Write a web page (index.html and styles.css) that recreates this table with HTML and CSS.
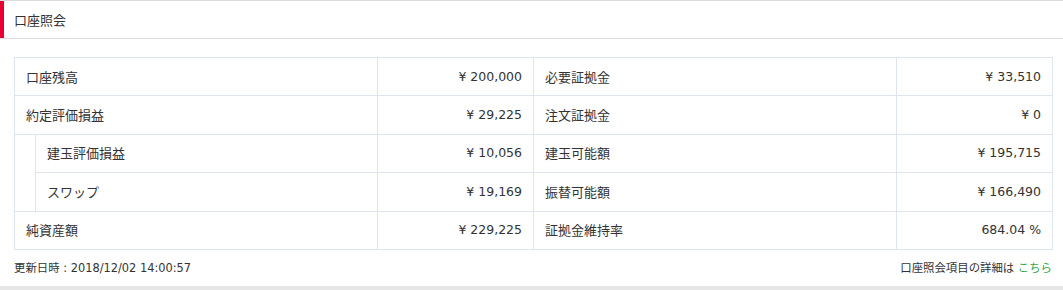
FILE: index.html
```html
<!DOCTYPE html>
<html lang="ja">
<head>
<meta charset="utf-8">
<link rel="stylesheet" href="styles.css">
</head>
<body>
<div class="panel">
  <div class="panel-head"><span class="panel-title">口座照会</span></div>
  <div class="panel-body">
    <table class="acct">
      <colgroup>
        <col class="c-indent"><col class="c-label"><col class="c-val"><col class="c-label2"><col class="c-val">
      </colgroup>
      <tr>
        <td colspan="2" class="lbl">口座残高</td>
        <td class="val">¥ 200,000</td>
        <td class="lbl">必要証拠金</td>
        <td class="val">¥ 33,510</td>
      </tr>
      <tr>
        <td colspan="2" class="lbl">約定評価損益</td>
        <td class="val">¥ 29,225</td>
        <td class="lbl">注文証拠金</td>
        <td class="val">¥ 0</td>
      </tr>
      <tr>
        <td rowspan="2" class="indent"></td>
        <td class="lbl">建玉評価損益</td>
        <td class="val">¥ 10,056</td>
        <td class="lbl">建玉可能額</td>
        <td class="val">¥ 195,715</td>
      </tr>
      <tr>
        <td class="lbl">スワップ</td>
        <td class="val">¥ 19,169</td>
        <td class="lbl">振替可能額</td>
        <td class="val">¥ 166,490</td>
      </tr>
      <tr>
        <td colspan="2" class="lbl">純資産額</td>
        <td class="val">¥ 229,225</td>
        <td class="lbl">証拠金維持率</td>
        <td class="val">684.04 %</td>
      </tr>
    </table>
    <div class="foot">
      <span>更新日時 : 2018/12/02 14:00:57</span>
      <span>口座照会項目の詳細は <a class="link" href="#">こちら</a></span>
    </div>
  </div>
</div>
</body>
</html>
```

FILE: styles.css
```css
html, body {
  margin: 0;
  padding: 0;
  background: #fff;
}
body {
  font-family: "Noto Sans CJK JP", "DejaVu Sans", sans-serif;
  color: #333;
  width: 1063px;
  height: 290px;
  overflow: hidden;
}
.panel {
  border-bottom: 4px solid #e6e6e6;
  height: 286px;
  box-sizing: content-box;
}
.panel-head {
  border-top: 1px solid #dcdcdc;
  border-bottom: 1px solid #dcdcdc;
  height: 37px;
  display: flex;
  align-items: center;
  box-shadow: inset 4px 0 0 #e60033;
  padding-left: 14px;
}
.panel-title {
  font-size: 13px;
  line-height: 20px;
}
.panel-body {
  padding: 18px 11px 0 14px;
}
.acct {
  width: 1038px;
  border-collapse: collapse;
  table-layout: fixed;
  font-size: 13px;
}
.c-indent { width: 21px; }
.c-label { width: 342px; }
.c-label2 { width: 363px; }
.c-val { width: 156px; }
.acct td {
  border: 1px solid #dfe5ec;
  height: 38.4px;
  padding: 0 11px 0 11px;
  box-sizing: border-box;
  line-height: 20px;
  white-space: nowrap;
}
.acct td.indent {
  padding: 0;
}
.acct td.val {
  text-align: right;
  font-family: "DejaVu Sans", "Noto Sans CJK JP", sans-serif;
  font-size: 12.5px;
}
.foot {
  display: flex;
  justify-content: space-between;
  font-family: "DejaVu Sans", "Noto Sans CJK JP", sans-serif;
  font-size: 11.4px;
  line-height: 16px;
  margin-top: 10px;
}
.link {
  color: #2fa64a;
  text-decoration: none;
}
```
